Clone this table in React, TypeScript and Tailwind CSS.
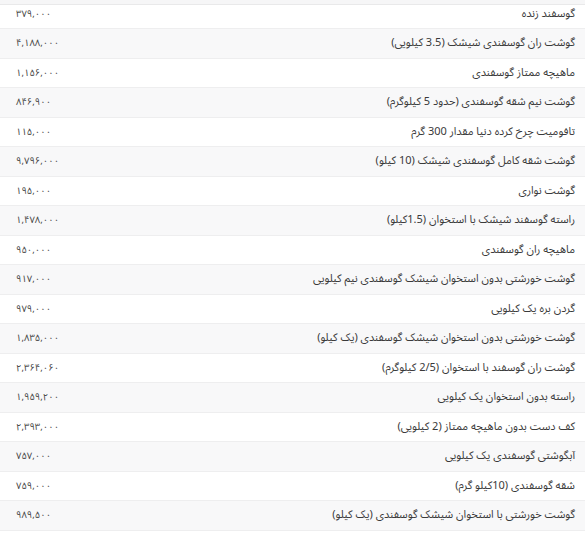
import React from "react";

const rows: [string, string][] = [
  ["گوسفند زنده", "۳۷۹,۰۰۰"],
  ["گوشت ران گوسفندی شیشک (3.5 کیلویی)", "۴,۱۸۸,۰۰۰"],
  ["ماهیچه ممتاز گوسفندی", "۱,۱۵۶,۰۰۰"],
  ["گوشت نیم شقه گوسفندی (حدود 5 کیلوگرم)", "۸۴۶,۹۰۰"],
  ["تافومیت چرخ کرده دنیا مقدار 300 گرم", "۱۱۵,۰۰۰"],
  ["گوشت شقه کامل گوسفندی شیشک (10 کیلو)", "۹,۷۹۶,۰۰۰"],
  ["گوشت نواری", "۱۹۵,۰۰۰"],
  ["راسته گوسفند شیشک با استخوان (1.5کیلو)", "۱,۴۷۸,۰۰۰"],
  ["ماهیچه ران گوسفندی", "۹۵۰,۰۰۰"],
  ["گوشت خورشتی بدون استخوان شیشک گوسفندی نیم کیلویی", "۹۱۷,۰۰۰"],
  ["گردن بره یک کیلویی", "۹۷۹,۰۰۰"],
  ["گوشت خورشتی بدون استخوان شیشک گوسفندی (یک کیلو)", "۱,۸۳۵,۰۰۰"],
  ["گوشت ران گوسفند با استخوان (2/5 کیلوگرم)", "۲,۳۶۴,۰۶۰"],
  ["راسته بدون استخوان یک کیلویی", "۱,۹۵۹,۲۰۰"],
  ["کف دست بدون ماهیچه ممتاز (2 کیلویی)", "۲,۳۹۳,۰۰۰"],
  ["آبگوشتی گوسفندی یک کیلویی", "۷۵۷,۰۰۰"],
  ["شقه گوسفندی (10کیلو گرم)", "۷۵۹,۰۰۰"],
  ["گوشت خورشتی با استخوان شیشک گوسفندی (یک کیلو)", "۹۸۹,۵۰۰"],
];

export default function App() {
  return (
    <div
      dir="rtl"
      className="w-[585px] h-[537px] overflow-hidden bg-white text-[#3a3a3a] text-[11px] leading-5"
      style={{ fontFamily: '"Noto Sans Arabic", "DejaVu Sans", sans-serif' }}
    >
      <div className="h-[5px] bg-[#f6f6f7] border-b border-[#e9e9ea]" />
      {rows.map(([name, price], i) => (
        <div
          key={i}
          className={`flex justify-between items-center border-b border-[#eeeeef] ${
            i === 0 ? "h-[24px] pb-[6px]" : "h-[29.5px]"
          } ${i % 2 === 1 ? "bg-[#f8f8f9]" : "bg-white"}`}
        >
          <div className="pr-[10px]">{name}</div>
          <div className="pl-[16px] text-[9.5px] text-[#444]">{price}</div>
        </div>
      ))}
    </div>
  );
}
